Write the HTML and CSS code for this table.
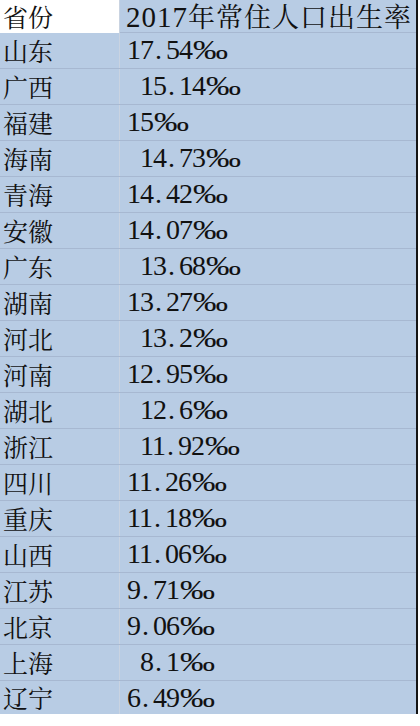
FILE: index.html
```html
<!DOCTYPE html>
<html lang="zh-CN">
<head>
<meta charset="utf-8">
<title>2017年常住人口出生率</title>
<link rel="stylesheet" href="styles.css">
</head>
<body>
<div class="sheet">
  <div class="row head">
    <div class="c1 white">省份</div>
    <div class="c2 htitle"><span class="hnum">2017</span>年常住人口出生率</div>
  </div>
  <div class="row"><div class="c1">山东</div><div class="c2">17<span class="dot">.</span>54<span class="pm">‰</span></div></div>
  <div class="row"><div class="c1">广西</div><div class="c2 sp">15<span class="dot">.</span>14<span class="pm">‰</span></div></div>
  <div class="row"><div class="c1">福建</div><div class="c2">15<span class="pm">‰</span></div></div>
  <div class="row"><div class="c1">海南</div><div class="c2 sp">14<span class="dot">.</span>73<span class="pm">‰</span></div></div>
  <div class="row"><div class="c1">青海</div><div class="c2">14<span class="dot">.</span>42<span class="pm">‰</span></div></div>
  <div class="row"><div class="c1">安徽</div><div class="c2">14<span class="dot">.</span>07<span class="pm">‰</span></div></div>
  <div class="row"><div class="c1">广东</div><div class="c2 sp">13<span class="dot">.</span>68<span class="pm">‰</span></div></div>
  <div class="row"><div class="c1">湖南</div><div class="c2">13<span class="dot">.</span>27<span class="pm">‰</span></div></div>
  <div class="row"><div class="c1">河北</div><div class="c2 sp">13<span class="dot">.</span>2<span class="pm">‰</span></div></div>
  <div class="row"><div class="c1">河南</div><div class="c2">12<span class="dot">.</span>95<span class="pm">‰</span></div></div>
  <div class="row"><div class="c1">湖北</div><div class="c2 sp">12<span class="dot">.</span>6<span class="pm">‰</span></div></div>
  <div class="row"><div class="c1">浙江</div><div class="c2 sp">11<span class="dot">.</span>92<span class="pm">‰</span></div></div>
  <div class="row"><div class="c1">四川</div><div class="c2">11<span class="dot">.</span>26<span class="pm">‰</span></div></div>
  <div class="row"><div class="c1">重庆</div><div class="c2">11<span class="dot">.</span>18<span class="pm">‰</span></div></div>
  <div class="row"><div class="c1">山西</div><div class="c2">11<span class="dot">.</span>06<span class="pm">‰</span></div></div>
  <div class="row"><div class="c1">江苏</div><div class="c2">9<span class="dot">.</span>71<span class="pm">‰</span></div></div>
  <div class="row"><div class="c1">北京</div><div class="c2">9<span class="dot">.</span>06<span class="pm">‰</span></div></div>
  <div class="row"><div class="c1">上海</div><div class="c2 sp">8<span class="dot">.</span>1<span class="pm">‰</span></div></div>
  <div class="row last"><div class="c1">辽宁</div><div class="c2">6<span class="dot">.</span>49<span class="pm">‰</span></div></div>
</div>
</body>
</html>
```

FILE: styles.css
```css
html, body {
  margin: 0;
  padding: 0;
  background: #ffffff;
}

.sheet {
  width: 416px;
  border-right: 2px solid #141414;
  background: #b8cce4;
  color: #111111;
}

.row {
  display: grid;
  grid-template-columns: 120px 296px;
  height: 36px;
  box-sizing: border-box;
  border-bottom: 1px solid #a7b8d1;
}

.row.head {
  height: 33px;
}

.row.last {
  height: 33px;
  border-bottom: none;
}

.c1 {
  box-sizing: border-box;
  border-right: 1px solid #c9d3e1;
  padding-left: 3px;
  font-family: "Noto Serif CJK SC", "Noto Sans CJK SC", sans-serif;
  font-size: 25px;
  line-height: 34px;
  white-space: nowrap;
}

.last .c1 {
  line-height: 32px;
}

.head .c1 {
  line-height: 32px;
}

.white {
  background: #ffffff;
}

.c2 {
  padding-left: 7px;
  padding-top: 1px;
  font-family: "Liberation Serif", "Noto Sans CJK SC", serif;
  font-size: 28px;
  letter-spacing: -1px;
  line-height: 32px;
  white-space: nowrap;
}

.c2.sp {
  padding-left: 20px;
}

.htitle {
  padding-left: 6px;
  padding-top: 0;
  font-family: "Noto Serif CJK SC", "Noto Sans CJK SC", sans-serif;
  font-size: 27px;
  line-height: 32px;
  letter-spacing: 1px;
}

.hnum {
  font-family: "Liberation Serif", serif;
  font-size: 29px;
  letter-spacing: 1px;
}

.dot {
  display: inline-block;
  width: 11px;
  padding-left: 2px;
}

.pm {
  display: inline-block;
  margin-left: 1px;
  transform: scaleX(1.25);
  transform-origin: left center;
}
```
